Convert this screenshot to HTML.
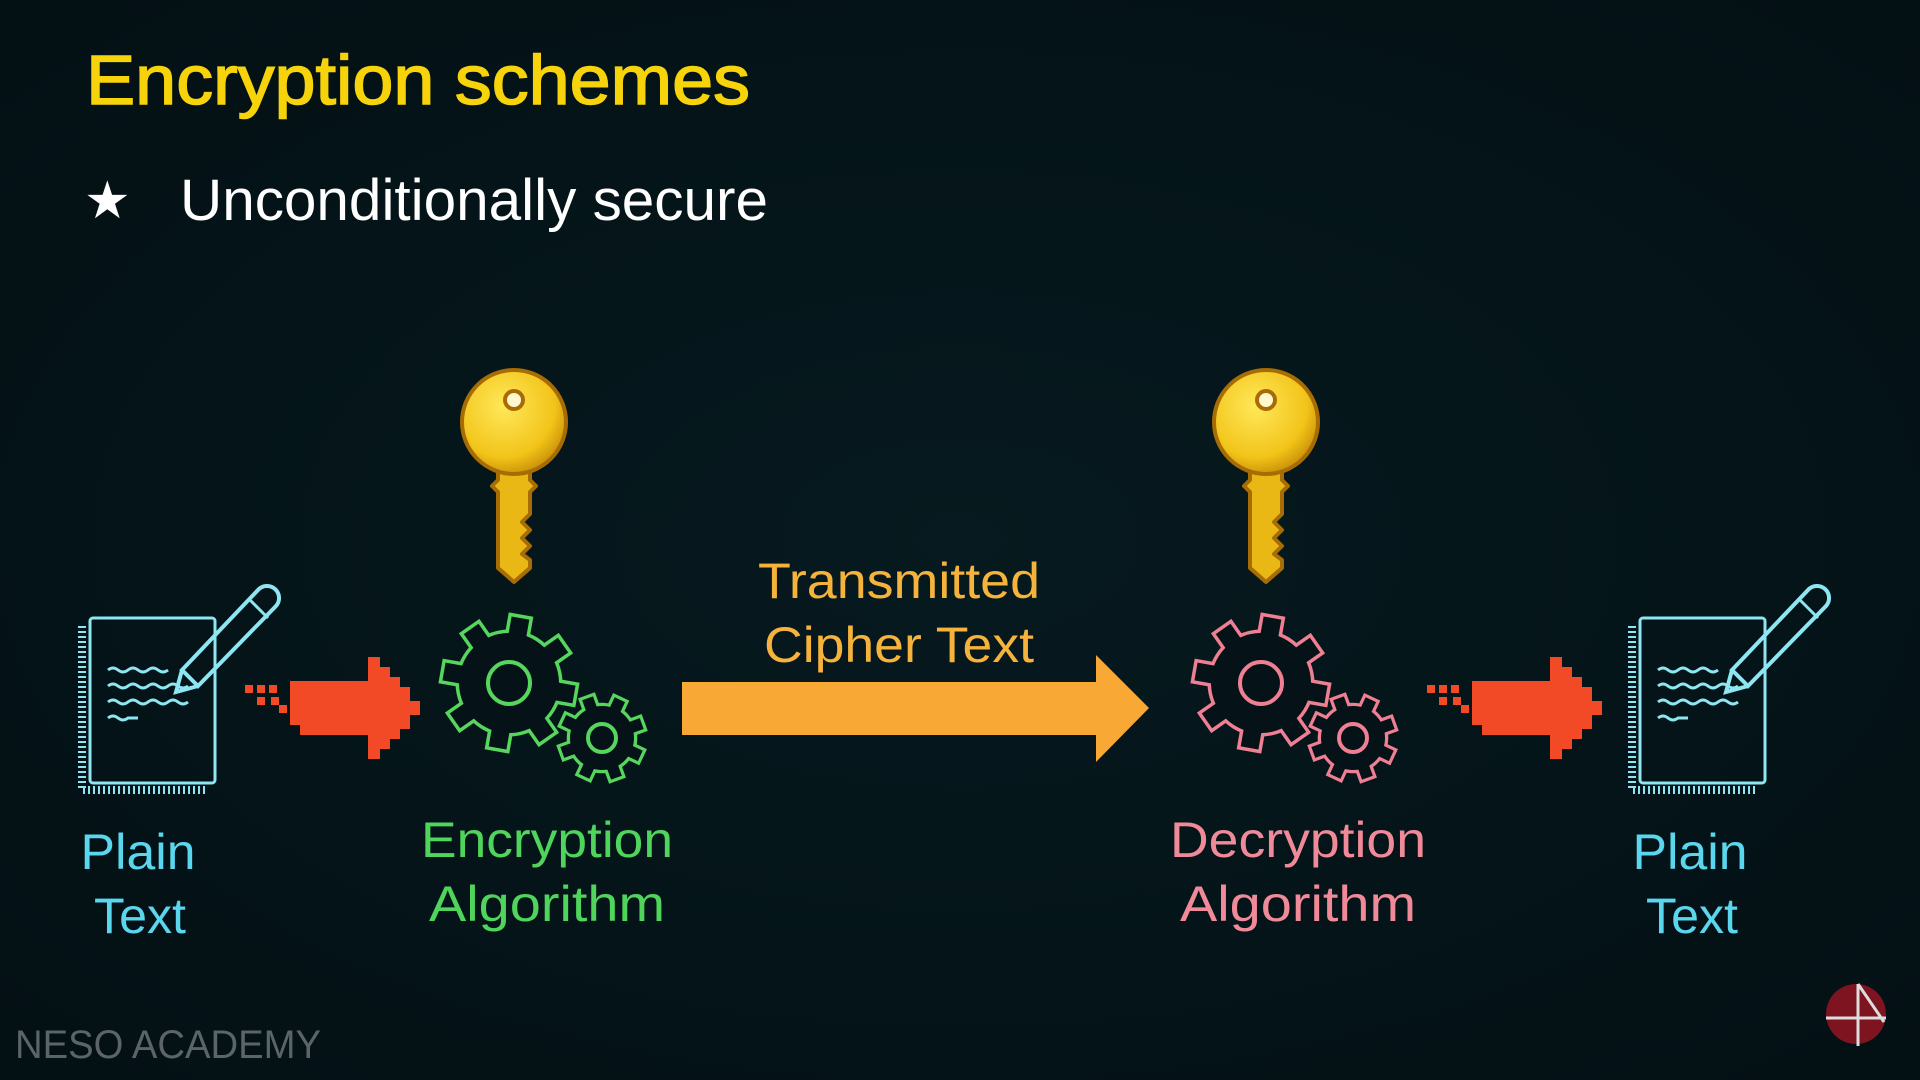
<!DOCTYPE html>
<html><head><meta charset="utf-8"><style>
html,body{margin:0;padding:0;background:#051318;}
svg{display:block}
text{font-family:"Liberation Sans","DejaVu Sans",sans-serif;}
</style></head><body>
<svg width="1920" height="1080" viewBox="0 0 1920 1080" xmlns="http://www.w3.org/2000/svg">
<defs>
<radialGradient id="bg" cx="50%" cy="50%" r="75%">
<stop offset="0" stop-color="#061a1f"/><stop offset="1" stop-color="#030f13"/>
</radialGradient>
<radialGradient id="kg" cx="40%" cy="35%" r="70%">
<stop offset="0" stop-color="#ffe85a"/><stop offset="0.7" stop-color="#f2c419"/><stop offset="1" stop-color="#c58a05"/>
</radialGradient>
<g id="gparts">
<circle r="50"/>
<rect x="-9" y="-66" width="18" height="22"/>
<rect x="-9" y="-66" width="18" height="22" transform="rotate(45)"/>
<rect x="-9" y="-66" width="18" height="22" transform="rotate(90)"/>
<rect x="-9" y="-66" width="18" height="22" transform="rotate(135)"/>
<rect x="-9" y="-66" width="18" height="22" transform="rotate(180)"/>
<rect x="-9" y="-66" width="18" height="22" transform="rotate(225)"/>
<rect x="-9" y="-66" width="18" height="22" transform="rotate(270)"/>
<rect x="-9" y="-66" width="18" height="22" transform="rotate(315)"/>
</g>
<g id="key">
<path d="M-16 44 L-16 58 L-22 64 L-16 70 L-16 146 L0 160 L16 146 L16 138 L8 132 L16 124 L8 116 L16 108 L8 100 L16 92 L16 70 L22 64 L16 58 L16 44 Z" fill="#e9b814" stroke="#a86c05" stroke-width="4" stroke-linejoin="round"/>
<circle cx="0" cy="0" r="52" fill="url(#kg)" stroke="#a86c05" stroke-width="4"/>
<circle cx="0" cy="-22" r="9" fill="#fff7d0" stroke="#a86c05" stroke-width="4"/>
</g>
<g id="doc" fill="none" stroke="#8ee6f2" stroke-width="3">
<rect x="0" y="0" width="125" height="165" rx="3"/>
<path d="M-8 8 V172 H115" stroke-width="8" stroke-dasharray="2 3"/>
<path d="M18 52 q5 -4 10 0 t10 0 t10 0 t10 0 t10 0 t10 0" />
<path d="M18 68 q5 -4 10 0 t10 0 t10 0 t10 0 t10 0 t10 0 t10 0 t10 0" />
<path d="M18 84 q5 -4 10 0 t10 0 t10 0 t10 0 t10 0 t10 0 t10 0 t10 0" />
<path d="M18 100 q5 -4 10 0 t10 0 H48" />
<path d="M92 52 L168 -28 a12 12 0 0 1 18 16 L108 68 Z" stroke-width="4"/>
<path d="M92 52 L86 74 L108 68" stroke-width="4"/>
<path d="M160 -18 L178 0" stroke-width="3"/>
</g>
<g id="redarrow" fill="#f24a26">
<path d="M45 24 H123 V0 H135 V10 H145 V20 H155 V30 H165 V44 H175 V58 H165 V72 H155 V82 H145 V92 H135 V102 H123 V78 H55 V68 H45 Z"/>
<rect x="0" y="28" width="8" height="8"/><rect x="12" y="28" width="8" height="8"/><rect x="24" y="28" width="8" height="8"/>
<rect x="12" y="40" width="8" height="8"/><rect x="26" y="40" width="8" height="8"/><rect x="34" y="48" width="8" height="8"/>
</g>
</defs>
<rect width="1920" height="1080" fill="url(#bg)"/>

<text x="86" y="104" font-size="70" fill="#f6d30a" stroke="#f6d30a" stroke-width="1.5" textLength="664" lengthAdjust="spacingAndGlyphs">Encryption schemes</text>
<text x="84" y="218" font-size="52" fill="#fff">★</text>
<text x="180" y="220" font-size="58" fill="#fff" textLength="588" lengthAdjust="spacingAndGlyphs">Unconditionally secure</text>

<use href="#doc" x="90" y="618"/>
<use href="#redarrow" x="245" y="657"/>
<use href="#key" x="514" y="422"/>

<g transform="translate(509,683) rotate(10)"><use href="#gparts" fill="#57d65e" stroke="#57d65e" stroke-width="7"/><use href="#gparts" fill="#051318" stroke="none"/></g>
<circle cx="509" cy="683" r="21" fill="none" stroke="#57d65e" stroke-width="4"/>
<g transform="translate(602,738) scale(0.64) rotate(25)"><use href="#gparts" fill="#57d65e" stroke="#57d65e" stroke-width="10"/><use href="#gparts" fill="#051318" stroke="none"/></g>
<circle cx="602" cy="738" r="14" fill="none" stroke="#57d65e" stroke-width="4"/>

<text x="547" y="857" font-size="50" fill="#4fd55b" text-anchor="middle" textLength="252" lengthAdjust="spacingAndGlyphs">Encryption</text>
<text x="547" y="921" font-size="50" fill="#4fd55b" text-anchor="middle" textLength="236" lengthAdjust="spacingAndGlyphs">Algorithm</text>
<text x="138" y="869" font-size="50" fill="#5ad6ee" text-anchor="middle" textLength="115" lengthAdjust="spacingAndGlyphs">Plain</text>
<text x="140" y="933" font-size="50" fill="#5ad6ee" text-anchor="middle" textLength="92" lengthAdjust="spacingAndGlyphs">Text</text>

<text x="899" y="598" font-size="50" fill="#f6b33c" text-anchor="middle" textLength="282" lengthAdjust="spacingAndGlyphs">Transmitted</text>
<text x="899" y="662" font-size="50" fill="#f6b33c" text-anchor="middle" textLength="270" lengthAdjust="spacingAndGlyphs">Cipher Text</text>
<path d="M682 682 H1096 V655 L1149 708 L1096 762 V735 H682 Z" fill="#f8a935"/>

<use href="#key" x="1266" y="422"/>
<g transform="translate(1261,683) rotate(10)"><use href="#gparts" fill="#ef7f93" stroke="#ef7f93" stroke-width="7"/><use href="#gparts" fill="#051318" stroke="none"/></g>
<circle cx="1261" cy="683" r="21" fill="none" stroke="#ef7f93" stroke-width="4"/>
<g transform="translate(1353,738) scale(0.64) rotate(25)"><use href="#gparts" fill="#ef7f93" stroke="#ef7f93" stroke-width="10"/><use href="#gparts" fill="#051318" stroke="none"/></g>
<circle cx="1353" cy="738" r="14" fill="none" stroke="#ef7f93" stroke-width="4"/>
<text x="1298" y="857" font-size="50" fill="#f08a99" text-anchor="middle" textLength="256" lengthAdjust="spacingAndGlyphs">Decryption</text>
<text x="1298" y="921" font-size="50" fill="#f08a99" text-anchor="middle" textLength="236" lengthAdjust="spacingAndGlyphs">Algorithm</text>

<use href="#redarrow" x="1427" y="657"/>
<use href="#doc" x="1640" y="618"/>
<text x="1690" y="869" font-size="50" fill="#5ad6ee" text-anchor="middle" textLength="115" lengthAdjust="spacingAndGlyphs">Plain</text>
<text x="1692" y="933" font-size="50" fill="#5ad6ee" text-anchor="middle" textLength="92" lengthAdjust="spacingAndGlyphs">Text</text>

<text x="15" y="1058" font-size="40" fill="#5b6466" textLength="306" lengthAdjust="spacingAndGlyphs">NESO ACADEMY</text>
<circle cx="1856" cy="1014" r="30" fill="#7d1420"/>
<path d="M1826 1018 H1886 M1858 984 V1046 M1858 984 L1884 1022" stroke="#ddd" stroke-width="3" fill="none"/>
</svg>
</body></html>
